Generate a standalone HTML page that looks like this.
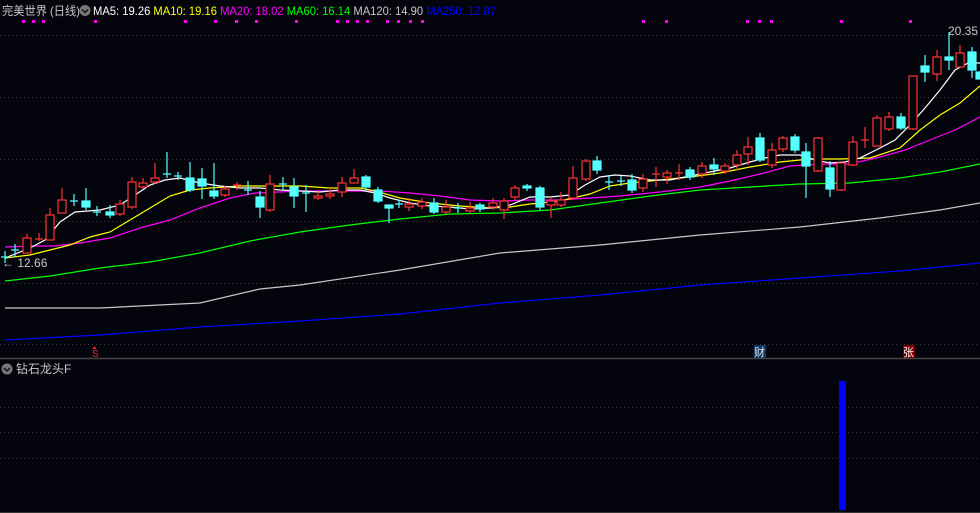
<!DOCTYPE html>
<html><head><meta charset="utf-8"><style>
html,body{margin:0;padding:0;background:#04040c;width:980px;height:513px;overflow:hidden}
svg{display:block}
text{font-family:"Liberation Sans","Noto Sans CJK SC",sans-serif}
</style></head><body>
<svg width="980" height="513" viewBox="0 0 980 513" xmlns="http://www.w3.org/2000/svg">
<rect width="980" height="513" fill="#04040c"/>
<!-- grid -->
<g stroke="#3a3a3a" stroke-width="1" stroke-dasharray="1,3">
<line x1="0" y1="35.5" x2="980" y2="35.5"/><line x1="0" y1="97.5" x2="980" y2="97.5"/>
<line x1="0" y1="159.5" x2="980" y2="159.5"/><line x1="0" y1="221.5" x2="980" y2="221.5"/>
<line x1="0" y1="283.5" x2="980" y2="283.5"/><line x1="0" y1="344.5" x2="980" y2="344.5"/>
<line x1="0" y1="407.5" x2="980" y2="407.5"/><line x1="0" y1="432.5" x2="980" y2="432.5"/>
<line x1="0" y1="458.5" x2="980" y2="458.5"/>
</g>
<line x1="0" y1="358.5" x2="980" y2="358.5" stroke="#444" stroke-width="1.5"/>
<line x1="0" y1="512.5" x2="980" y2="512.5" stroke="#333"/>
<!-- header -->
<text x="2" y="15" font-size="12" fill="#c8c8c8" textLength="78" lengthAdjust="spacingAndGlyphs">完美世界 (日线)</text>
<circle cx="85" cy="10.5" r="5.5" fill="#777"/><path d="M82 9.5 L85 12.5 L88 9.5" stroke="#111" stroke-width="1.5" fill="none"/>
<text x="93" y="15" font-size="12" textLength="403" lengthAdjust="spacingAndGlyphs"><tspan fill="#ffffff">MA5: 19.26 </tspan><tspan fill="#ffff00">MA10: 19.16 </tspan><tspan fill="#ff00ff">MA20: 18.02 </tspan><tspan fill="#00ff00">MA60: 16.14 </tspan><tspan fill="#c8c8c8">MA120: 14.90 </tspan><tspan fill="#0000ff">MA250: 12.87</tspan></text>
<g fill="#ff00ff">
<rect x="22" y="20" width="3" height="3"/><rect x="32" y="20" width="3" height="3"/><rect x="42" y="20" width="3" height="3"/><rect x="94" y="20" width="3" height="3"/><rect x="184" y="20" width="3" height="3"/><rect x="214" y="20" width="3" height="3"/><rect x="235" y="20" width="3" height="3"/><rect x="255" y="20" width="3" height="3"/><rect x="295" y="20" width="3" height="3"/><rect x="336" y="20" width="3" height="3"/><rect x="346" y="20" width="3" height="3"/><rect x="356" y="20" width="3" height="3"/><rect x="366" y="20" width="3" height="3"/><rect x="386" y="20" width="3" height="3"/><rect x="397" y="20" width="3" height="3"/><rect x="409" y="20" width="3" height="3"/><rect x="421" y="20" width="3" height="3"/><rect x="642" y="20" width="3" height="3"/><rect x="665" y="20" width="3" height="3"/><rect x="746" y="20" width="3" height="3"/><rect x="758" y="20" width="3" height="3"/><rect x="770" y="20" width="3" height="3"/><rect x="840" y="20" width="3" height="3"/><rect x="909" y="20" width="3" height="3"/>
</g>
<!-- MAs -->
<g fill="none" stroke-width="1.2">
<polyline stroke="#0000ff" points="5,340 100,335 200,327 300,321 400,314 500,303 600,295 700,285 800,278 900,271 980,263"/>
<polyline stroke="#c8c8c8" points="5,308 100,308 200,303 260,289 300,285 400,270 500,253 600,245 700,235 800,227 880,218 940,210 980,203"/>
<polyline stroke="#00ff00" points="5,281 50,276 100,268 150,262 200,253 250,241 300,232 350,225 400,219 450,214 500,213 550,210 600,203 650,196 700,190 750,187 800,184 850,183 900,178 940,172 980,164"/>
<polyline stroke="#ff00ff" points="5,247 30,246 55,246 80,243 110,238 140,228 170,220 200,208 230,198 255,193 280,192 300,191 330,191 360,191 380,191 410,193 440,196 470,200 500,201 530,200 560,200 590,198 620,196 660,192 700,187 730,181 760,174 790,166 820,164 850,164 880,157 905,150 930,140 955,130 980,117"/>
<polyline stroke="#ffff00" points="5,258 30,255 50,250 70,245 90,237 110,232 130,220 150,208 170,196 190,190 210,188 240,186 270,186 300,186 330,188 360,188 375,191 400,198 430,203 460,206 490,208 510,207 530,204 560,201 590,194 610,186 630,183 660,180 690,177 720,173 750,167 780,162 810,159 840,159 870,158 900,148 920,130 940,115 960,103 980,86"/>
<polyline stroke="#ffffff" points="5,258 30,248 45,240 60,222 75,212 100,210 120,205 135,195 150,185 165,180 180,178 200,183 220,186 240,188 260,188 280,190 300,191 320,192 340,190 360,190 375,193 390,198 410,203 430,206 450,207 470,209 490,208 510,205 530,197 550,197 570,195 585,185 600,177 615,175 630,176 650,180 670,180 690,176 710,172 730,168 750,162 765,158 780,155 800,155 815,160 830,163 845,162 860,158 880,148 895,140 910,125 925,108 940,90 955,70 968,63 980,63"/>
</g>
<!-- candles: red hollow -->
<g stroke="#ff3434" fill="none" stroke-width="1.2">
<path d="M27 234V253"/><rect x="23" y="238" width="8" height="15" fill="#04040c"/>
<path d="M35 239h8M39 233V241"/>
<path d="M50 208V240"/><rect x="46" y="215" width="8" height="25" fill="#04040c"/>
<path d="M62 188V213"/><rect x="58" y="200" width="8" height="13" fill="#04040c"/>
<path d="M120 200V216"/><rect x="116" y="204" width="8" height="10" fill="#04040c"/>
<path d="M132 177V209"/><rect x="128" y="182" width="8" height="25" fill="#04040c"/>
<path d="M143 178V189"/><rect x="139" y="183" width="8" height="4" fill="#04040c"/>
<path d="M155 163V184"/><rect x="151" y="178" width="8" height="4" fill="#04040c"/>
<path d="M225 186V197"/><rect x="221" y="189" width="8" height="6" fill="#04040c"/>
<path d="M233 185h8M237 182V190"/>
<path d="M270 175V212"/><rect x="266" y="184" width="8" height="26" fill="#04040c"/>
<path d="M318 190V200"/><rect x="314" y="196" width="8" height="2" fill="#04040c"/>
<path d="M330 187V199"/><rect x="326" y="194" width="8" height="2" fill="#04040c"/>
<path d="M342 177V197"/><rect x="338" y="183" width="8" height="9" fill="#04040c"/>
<path d="M354 169V183"/><rect x="350" y="178" width="8" height="5" fill="#04040c"/>
<path d="M409 198V211"/><rect x="405" y="204" width="8" height="3" fill="#04040c"/>
<path d="M422 198V209"/><rect x="418" y="202" width="8" height="4" fill="#04040c"/>
<path d="M446 200V214"/><rect x="442" y="207" width="8" height="5" fill="#04040c"/>
<path d="M470 202V213"/><rect x="466" y="208" width="8" height="3" fill="#04040c"/>
<path d="M493 198V210"/><rect x="489" y="203" width="8" height="4" fill="#04040c"/>
<path d="M504 198V219"/><rect x="500" y="201" width="8" height="9" fill="#04040c"/>
<path d="M515 185V200"/><rect x="511" y="188" width="8" height="9" fill="#04040c"/>
<path d="M551 197V218"/><rect x="547" y="201" width="8" height="4" fill="#04040c"/>
<path d="M561 192V207"/><rect x="557" y="200" width="8" height="5" fill="#04040c"/>
<path d="M573 166V200"/><rect x="569" y="178" width="8" height="20" fill="#04040c"/>
<path d="M586 159V181"/><rect x="582" y="161" width="8" height="18" fill="#04040c"/>
<path d="M643 174V192"/><rect x="639" y="179" width="8" height="9" fill="#04040c"/>
<path d="M652 174h8M656 167V187"/>
<path d="M667 170V184"/><rect x="663" y="173" width="8" height="4" fill="#04040c"/>
<path d="M675 173h8M679 164V180"/>
<path d="M702 162V178"/><rect x="698" y="166" width="8" height="8" fill="#04040c"/>
<path d="M725 163V174"/><rect x="721" y="166" width="8" height="5" fill="#04040c"/>
<path d="M737 150V170"/><rect x="733" y="155" width="8" height="10" fill="#04040c"/>
<path d="M748 137V165"/><rect x="744" y="147" width="8" height="7" fill="#04040c"/>
<path d="M772 143V168"/><rect x="768" y="150" width="8" height="15" fill="#04040c"/>
<path d="M783 136V152"/><rect x="779" y="138" width="8" height="11" fill="#04040c"/>
<path d="M818 137V172"/><rect x="814" y="138" width="8" height="33" fill="#04040c"/>
<path d="M841 163V191"/><rect x="837" y="163" width="8" height="27" fill="#04040c"/>
<path d="M853 136V166"/><rect x="849" y="142" width="8" height="23" fill="#04040c"/>
<path d="M861 140h8M865 127V148"/>
<path d="M877 115V146"/><rect x="873" y="118" width="8" height="28" fill="#04040c"/>
<path d="M889 112V131"/><rect x="885" y="117" width="8" height="12" fill="#04040c"/>
<path d="M913 76V130"/><rect x="909" y="76" width="8" height="53" fill="#04040c"/>
<path d="M937 50V81"/><rect x="933" y="57" width="8" height="17" fill="#04040c"/>
<path d="M960 45V67"/><rect x="956" y="53" width="8" height="14" fill="#04040c"/>
</g>
<!-- cyan candles -->
<g stroke="#54ffff" fill="#54ffff" stroke-width="1.2">
<path d="M1 257h8M5 251V263"/>
<path d="M11 250h8M15 244V257"/>
<path d="M70 201h8M74 194V206"/>
<path d="M86 188V210"/><rect x="82" y="201" width="8" height="6"/>
<path d="M93 212h8M97 206V216"/>
<path d="M110 205V218"/><rect x="106" y="212" width="8" height="3"/>
<path d="M163 174h8M167 152V178"/>
<path d="M174 176h8M178 172V180"/>
<path d="M190 162V192"/><rect x="186" y="178" width="8" height="12"/>
<path d="M202 168V199"/><rect x="198" y="179" width="8" height="7"/>
<path d="M214 163V199"/><rect x="210" y="191" width="8" height="5"/>
<path d="M244 190h8M248 181V195"/>
<path d="M260 191V218"/><rect x="256" y="197" width="8" height="10"/>
<path d="M279 184h8M283 177V190"/>
<path d="M294 178V208"/><rect x="290" y="187" width="8" height="9"/>
<path d="M302 193h8M306 185V212"/>
<path d="M366 175V191"/><rect x="362" y="177" width="8" height="10"/>
<path d="M378 187V203"/><rect x="374" y="190" width="8" height="11"/>
<path d="M389 205V223"/><rect x="385" y="205" width="8" height="3"/>
<path d="M395 204h8M399 200V208"/>
<path d="M434 198V214"/><rect x="430" y="203" width="8" height="9"/>
<path d="M454 208h8M458 203V213"/>
<path d="M480 203V212"/><rect x="476" y="205" width="8" height="4"/>
<path d="M527 184V191"/><rect x="523" y="186" width="8" height="2"/>
<path d="M540 186V210"/><rect x="536" y="188" width="8" height="19"/>
<path d="M597 156V174"/><rect x="593" y="161" width="8" height="9"/>
<path d="M605 182h8M609 175V190"/>
<path d="M617 181h8M621 176V186"/>
<path d="M632 174V193"/><rect x="628" y="180" width="8" height="10"/>
<path d="M690 167V180"/><rect x="686" y="170" width="8" height="7"/>
<path d="M714 158V175"/><rect x="710" y="165" width="8" height="4"/>
<path d="M760 133V162"/><rect x="756" y="138" width="8" height="22"/>
<path d="M795 134V153"/><rect x="791" y="137" width="8" height="13"/>
<path d="M806 143V198"/><rect x="802" y="152" width="8" height="14"/>
<path d="M830 161V197"/><rect x="826" y="168" width="8" height="21"/>
<path d="M901 113V130"/><rect x="897" y="117" width="8" height="11"/>
<path d="M925 55V82"/><rect x="921" y="66" width="8" height="6"/>
<path d="M949 32V70"/><rect x="945" y="57" width="8" height="3"/>
<path d="M972 47V78"/><rect x="968" y="52" width="8" height="18"/>
<rect x="976" y="72" width="4" height="7"/>
</g>
<text x="948" y="35" font-size="12" fill="#c8c8c8">20.35</text>
<text x="2" y="267" font-size="12" fill="#c8c8c8">← 12.66</text>
<!-- markers -->
<text x="92" y="357" font-size="10" fill="#ff2020">S</text>
<path d="M94.5 346 L92.5 349 L96.5 349Z" fill="#ff2020"/>
<rect x="754" y="345" width="12" height="13" fill="#0a3a6a"/>
<text x="754" y="356" font-size="11" fill="#e0e0e0">财</text>
<rect x="903" y="345" width="12" height="13" fill="#7a0000"/>
<text x="903" y="356" font-size="11" fill="#ffffff">张</text>
<!-- lower panel -->
<circle cx="7" cy="369" r="5.5" fill="#777"/><path d="M4 368 L7 371 L10 368" stroke="#111" stroke-width="1.5" fill="none"/>
<text x="16" y="373" font-size="12" fill="#c8c8c8">钻石龙头F</text>
<rect x="839" y="381" width="7" height="129" fill="#0000ff"/>
</svg>
</body></html>
